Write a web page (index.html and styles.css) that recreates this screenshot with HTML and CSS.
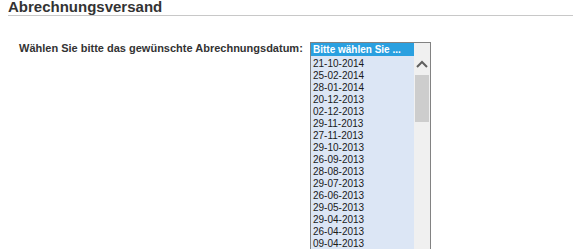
FILE: index.html
```html
<!DOCTYPE html>
<html lang="de">
<head>
    <meta charset="UTF-8">
    <title>Abrechnungsversand</title>
    <link rel="stylesheet" href="styles.css">
</head>
<body>
    <h2 class="page-title">Abrechnungsversand</h2>

    <div class="form-row">
        <label class="label" for="datum">Wählen Sie bitte das gewünschte Abrechnungsdatum:</label>
        <div class="listbox" id="datum">
            <ul class="options">
                <li class="option selected">Bitte wählen Sie ...</li>
                <li class="option">21-10-2014</li>
                <li class="option">25-02-2014</li>
                <li class="option">28-01-2014</li>
                <li class="option">20-12-2013</li>
                <li class="option">02-12-2013</li>
                <li class="option">29-11-2013</li>
                <li class="option">27-11-2013</li>
                <li class="option">29-10-2013</li>
                <li class="option">26-09-2013</li>
                <li class="option">28-08-2013</li>
                <li class="option">29-07-2013</li>
                <li class="option">26-06-2013</li>
                <li class="option">29-05-2013</li>
                <li class="option">29-04-2013</li>
                <li class="option">26-04-2013</li>
                <li class="option">09-04-2013</li>
            </ul>
            <div class="scrollbar">
                <svg class="arrow" width="16" height="10" viewBox="0 0 16 10">
                    <path d="M3 8 L8 3 L13 8" fill="none" stroke="#606060" stroke-width="2"/>
                </svg>
                <div class="thumb"></div>
            </div>
        </div>
    </div>
</body>
</html>
```

FILE: styles.css
```css
* {
    margin: 0;
    padding: 0;
    box-sizing: border-box;
}
body {
    font-family: "Liberation Sans", Arial, sans-serif;
    background-color: #ffffff;
    color: #333333;
    overflow: hidden;
}

.page-title {
    font-size: 15px;
    line-height: 14px;
    font-weight: bold;
    color: #333333;
    margin: 0 1px 0 8px;
    padding: 0 0 1px 0;
    border-bottom: 1px solid #c8c8c8;
}

.form-row {
    display: grid;
    grid-template-columns: 291px auto;
    padding-left: 19px;
    margin-top: 26px;
}

.label {
    font-size: 11px;
    font-weight: bold;
    line-height: 12px;
    color: #333333;
}

.listbox {
    display: flex;
    width: 121px;
    height: 220px;
    border: 1px solid #828282;
    border-bottom: none;
    background-color: #dce6f5;
    overflow: hidden;
}

.options {
    list-style: none;
    width: 103px;
}

.option {
    font-size: 10px;
    line-height: 12px;
    height: 12px;
    padding: 1px 0 0 2px;
    color: #1a1a1a;
    white-space: nowrap;
}

.option.selected {
    height: 13px;
    margin-bottom: 1px;
    background-color: #2aa0e0;
    color: #ffffff;
    font-weight: bold;
}

.scrollbar {
    width: 16px;
    background-color: #f0f0f0;
    display: flex;
    flex-direction: column;
    align-items: center;
}

.arrow {
    display: block;
    margin-top: 16px;
}

.thumb {
    width: 14px;
    height: 47px;
    margin-top: 6px;
    background-color: #cdcdcd;
}
```
